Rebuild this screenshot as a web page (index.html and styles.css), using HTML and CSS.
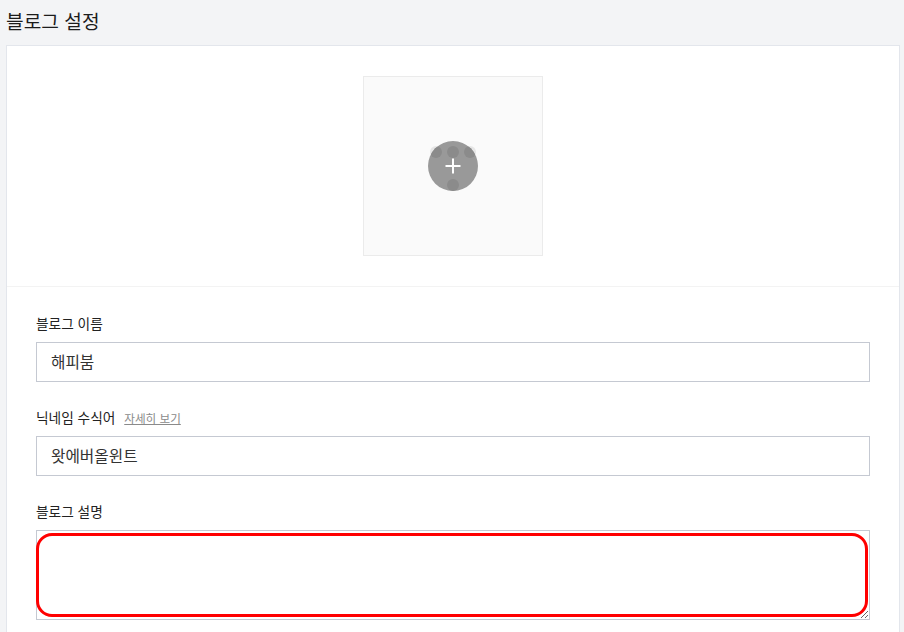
FILE: index.html
```html
<!DOCTYPE html>
<html lang="ko">
<head>
   <meta charset="UTF-8">
   <meta name="viewport" content="width=device-width, initial-scale=1.0">
   <title>블로그 설정</title>
   <link rel="stylesheet" href="styles.css">
</head>
<body>
   <h1 class="page-title">블로그 설정</h1>
   <div class="card">
       <div class="image-section">
           <div class="image-box">
               <div class="image-add">
                   <span class="dot-row">
                       <span class="dot"></span>
                       <span class="dot"></span>
                       <span class="dot"></span>
                   </span>
                   <span class="circle">
                       <span class="dot dot-top"></span>
                       <span class="dot dot-left"></span>
                       <span class="dot dot-right"></span>
                       <span class="dot dot-bottom"></span>
                       <svg class="plus" width="16" height="16" viewBox="0 0 16 16">
                           <path d="M8 0.5V15.5M0.5 8H15.5" stroke="#fff" stroke-width="2" fill="none"/>
                       </svg>
                   </span>
               </div>
           </div>
       </div>
       <form class="form-section">
           <div class="field">
               <label class="field-label" for="blogName">블로그 이름</label>
               <input class="text-input" id="blogName" type="text" value="해피붐">
           </div>
           <div class="field">
               <label class="field-label" for="nickName">닉네임 수식어 <a class="more-link" href="#">자세히 보기</a></label>
               <input class="text-input" id="nickName" type="text" value="왓에버올윈트">
           </div>
           <div class="field">
               <label class="field-label" for="blogDesc">블로그 설명</label>
               <div class="area-wrap">
                   <textarea class="text-area" id="blogDesc"></textarea>
                   <div class="highlight"></div>
               </div>
           </div>
       </form>
   </div>
</body>
</html>
```

FILE: styles.css
```css
html, body {
    height: 100%;
    overflow: hidden;
}

body {
    margin: 0;
    padding: 0 4px 0 6px;
    background-color: #f3f4f6;
    font-family: "Noto Sans CJK KR", "Noto Sans", sans-serif;
    color: #222;
}

.page-title {
    margin: 0;
    height: 45px;
    font-size: 19.2px;
    font-weight: 400;
    line-height: 43px;
    color: #1c1c1c;
}

.card {
    background-color: #fff;
    border: 1px solid #e3e6ec;
    border-bottom: none;
    height: 600px;
}

.image-section {
    display: flex;
    justify-content: center;
    padding: 30px 0;
    border-bottom: 1px solid #f3f3f3;
}

.image-box {
    box-sizing: border-box;
    width: 180px;
    height: 180px;
    display: flex;
    align-items: center;
    justify-content: center;
    background-color: #fafafa;
    border: 1px solid #ebebeb;
}

.image-add {
    position: relative;
    width: 50px;
    height: 50px;
}

.dot-row {
    position: absolute;
    left: 2px;
    right: 2px;
    top: 5px;
    display: flex;
    justify-content: space-between;
}

.dot-row .dot {
    background-color: #e6e6e6;
}

.circle {
    position: absolute;
    inset: 0;
    overflow: hidden;
    border-radius: 50%;
    background-color: #999;
}

.dot {
    display: block;
    width: 12px;
    height: 12px;
    border-radius: 50%;
    background-color: #8b8b8b;
}

.circle .dot {
    position: absolute;
}

.dot-top {
    left: 19px;
    top: 5px;
}

.dot-left {
    left: 2px;
    top: 5px;
}

.dot-right {
    right: 2px;
    top: 5px;
}

.dot-bottom {
    left: 19px;
    top: 38px;
}

.plus {
    position: absolute;
    left: 17px;
    top: 17px;
}

.form-section {
    padding: 25px 29px 0;
}

.field {
    margin-bottom: 24px;
}

.field-label {
    display: block;
    height: 30px;
    font-size: 13.7px;
    line-height: 22px;
    color: #222;
}

.more-link {
    margin-left: 5px;
    font-size: 11.6px;
    color: #8a8a8a;
    text-decoration: underline;
}

.text-input {
    display: block;
    box-sizing: border-box;
    width: 100%;
    height: 40px;
    padding: 0 14px 2px;
    border: 1px solid #c5c9d2;
    border-radius: 0;
    outline: none;
    font-family: inherit;
    font-size: 15.7px;
    color: #333;
}

.area-wrap {
    position: relative;
}

.text-area {
    display: block;
    box-sizing: border-box;
    width: 100%;
    height: 90px;
    padding: 10px 14px;
    border: 1px solid #c5c9d2;
    border-radius: 0;
    outline: none;
    font-family: inherit;
    font-size: 15px;
}

.highlight {
    position: absolute;
    left: 0;
    top: 3px;
    width: 832px;
    height: 84px;
    box-sizing: border-box;
    border: 3px solid #f00;
    border-radius: 16px;
    pointer-events: none;
}
```
